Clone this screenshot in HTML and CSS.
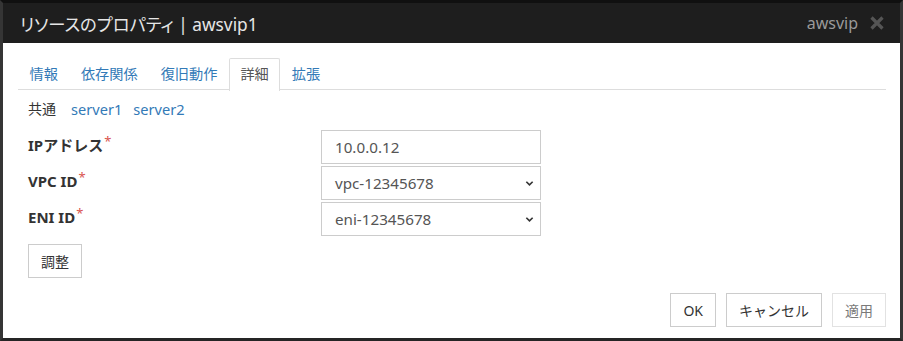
FILE: index.html
```
<!DOCTYPE html>
<html lang="ja">
<head>
<meta charset="utf-8">
<link rel="stylesheet" href="styles.css">
</head>
<body>
<div class="dialog">
  <div class="header">
    <div class="title">リソースのプロパティ | awsvip1</div>
    <div class="header-right">
      <span class="type">awsvip</span>
      <svg class="close" width="14" height="14" viewBox="0 0 14 14"><path d="M1.5 1.5 L12.5 12.5 M12.5 1.5 L1.5 12.5" stroke="#555" stroke-width="3.2" stroke-linecap="butt"/></svg>
    </div>
  </div>
  <div class="body">
    <ul class="tabs">
      <li class="tab">情報</li>
      <li class="tab">依存関係</li>
      <li class="tab">復旧動作</li>
      <li class="tab active">詳細</li>
      <li class="tab">拡張</li>
    </ul>
    <div class="subnav">
      <span class="cur">共通</span>
      <span class="link">server1</span>
      <span class="link">server2</span>
    </div>
    <div class="form">
      <div class="row">
        <label class="lbl">IPアドレス<span class="req">*</span></label>
        <div class="field"><div class="input">10.0.0.12</div></div>
      </div>
      <div class="row">
        <label class="lbl">VPC ID<span class="req">*</span></label>
        <div class="field"><div class="input select">vpc-12345678<svg class="chev" width="10" height="7" viewBox="0 0 10 7"><path d="M1.5 1.5 L5 5 L8.5 1.5" fill="none" stroke="#333" stroke-width="1.8"/></svg></div></div>
      </div>
      <div class="row">
        <label class="lbl">ENI ID<span class="req">*</span></label>
        <div class="field"><div class="input select">eni-12345678<svg class="chev" width="10" height="7" viewBox="0 0 10 7"><path d="M1.5 1.5 L5 5 L8.5 1.5" fill="none" stroke="#333" stroke-width="1.8"/></svg></div></div>
      </div>
    </div>
    <div class="adjust"><button class="btn">調整</button></div>
    <div class="footer">
      <button class="btn">OK</button>
      <button class="btn">キャンセル</button>
      <button class="btn disabled">適用</button>
    </div>
  </div>
</div>
</body>
</html>
```
FILE: styles.css
```
* { box-sizing: border-box; }
html, body { margin: 0; padding: 0; }
body {
  width: 903px;
  height: 341px;
  background: #2b2b2b;
  font-family: "Noto Sans", "Noto Sans CJK JP", sans-serif;
  font-size: 14px;
  color: #333;
  overflow: hidden;
}
.dialog {
  width: 903px;
  height: 341px;
  border-top: 3px solid #101010;
  border-left: 3px solid #353535;
  border-right: 3px solid #353535;
  border-bottom: 3px solid #252525;
  background: #fff;
  display: flex;
  flex-direction: column;
}
.header {
  height: 40px;
  background: #1e1e1e;
  display: flex;
  align-items: center;
  justify-content: space-between;
  padding: 0 16px 0 17px;
}
.title {
  color: #e6e6e6;
  font-size: 17.3px;
  font-feature-settings: "palt";
}
.header-right {
  display: flex;
  align-items: center;
  gap: 12px;
}
.type {
  color: #9a9a9a;
  font-size: 16px;
}
.close { display: block; }
.body {
  flex: 1;
  padding: 15px 14px 0 15px;
  display: flex;
  flex-direction: column;
}
.tabs {
  list-style: none;
  margin: 0;
  padding: 0;
  display: flex;
  border-bottom: 1px solid #ddd;
  height: 32px;
}
.tab {
  padding: 5px 10.5px 0 10.5px;
  height: 32px;
  color: #337ab7;
  font-size: 14.2px;
  line-height: 20px;
  border: 1px solid transparent;
  border-bottom: none;
}
.tab.active {
  color: #555;
  border-color: #ddd;
  background: #fff;
  height: 33px;
  border-radius: 2px 2px 0 0;
}
.subnav {
  display: flex;
  padding: 9px 0 0 10px;
  line-height: 20px;
}
.subnav .cur { color: #333; margin-right: 15px; }
.subnav .link { color: #337ab7; font-size: 14.6px; margin-right: 11px; }
.form {
  padding-top: 11px;
  padding-left: 10px;
  display: flex;
  flex-direction: column;
  gap: 2px;
}
.row {
  display: flex;
  align-items: center;
  height: 34px;
}
.lbl {
  width: 293px;
  font-weight: bold;
  color: #333;
  font-size: 15px;
  line-height: 20px;
  margin-top: -4px;
}
.req {
  color: #d9534f;
  font-weight: normal;
  font-size: 13px;
  position: relative;
  top: -5px;
  margin-left: 1px;
}
.field { width: 220px; }
.input {
  height: 34px;
  border: 1px solid #ccc;
  padding: 0 12px 0 13px;
  display: flex;
  align-items: center;
  justify-content: space-between;
  color: #555;
  font-size: 15.2px;
}
.chev { margin-right: -6px; width: 9px; }
.adjust {
  padding: 8px 0 0 10px;
}
.btn {
  height: 34px;
  padding: 0 12px;
  border: 1px solid #ccc;
  background: #fff;
  font-family: "Noto Sans", "Noto Sans CJK JP", sans-serif;
  font-size: 14px;
  color: #333;
  margin: 0;
}
.footer {
  display: flex;
  justify-content: flex-end;
  gap: 10px;
  padding-top: 15px;
}
.btn.disabled {
  border-color: #e2e2e2;
  color: #7a7a7a;
}
```
